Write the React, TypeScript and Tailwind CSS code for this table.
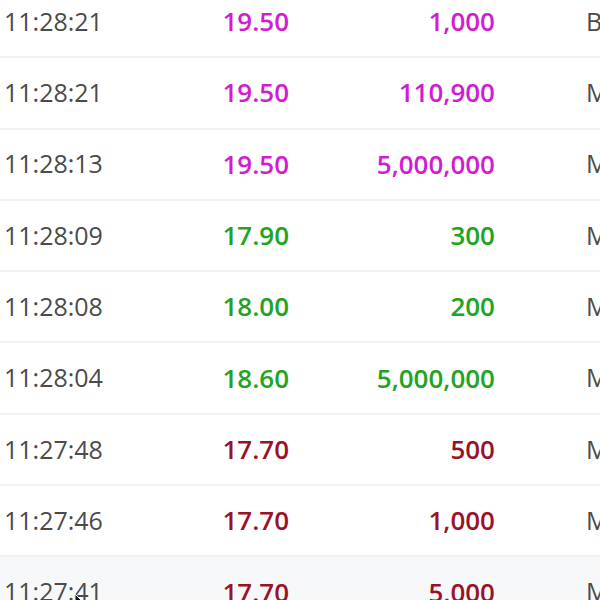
const trades = [
  { time: "11:28:21", price: "19.50", vol: "1,000", side: "B", tone: "ceil" },
  { time: "11:28:21", price: "19.50", vol: "110,900", side: "M", tone: "ceil" },
  { time: "11:28:13", price: "19.50", vol: "5,000,000", side: "M", tone: "ceil" },
  { time: "11:28:09", price: "17.90", vol: "300", side: "M", tone: "up" },
  { time: "11:28:08", price: "18.00", vol: "200", side: "M", tone: "up" },
  { time: "11:28:04", price: "18.60", vol: "5,000,000", side: "M", tone: "up" },
  { time: "11:27:48", price: "17.70", vol: "500", side: "M", tone: "down" },
  { time: "11:27:46", price: "17.70", vol: "1,000", side: "M", tone: "down" },
  { time: "11:27:41", price: "17.70", vol: "5,000", side: "M", tone: "down" },
];

const toneClass: Record<string, string> = {
  ceil: "text-[#d21cd2]",
  up: "text-[#22a322]",
  down: "text-[#9a1228]",
};

export default function App() {
  return (
    <div
      className="w-[600px] h-[600px] overflow-hidden bg-white"
      style={{ fontFamily: '"Open Sans", "Noto Sans", sans-serif' }}
    >
      <div className="-mt-[13px]">
        {trades.map((t, i) => {
          const last = i === trades.length - 1;
          return (
            <div
              key={i}
              className={`relative flex items-center h-[71.3px] border-b-2 border-[#f1f1f1] text-[25px] ${
                last ? "bg-[#f6f8fa]" : "bg-white"
              }`}
            >
              <span className="shrink-0 w-[200px] pl-[4px] text-[#4b4b4b]">{t.time}</span>
              <span className={`shrink-0 w-[89px] text-right text-[26px] font-semibold ${toneClass[t.tone]}`}>
                {t.price}
              </span>
              <span className={`shrink-0 w-[206px] text-right text-[26px] font-semibold ${toneClass[t.tone]}`}>
                {t.vol}
              </span>
              <span className="shrink-0 pl-[91px] text-[#4b4b4b] whitespace-nowrap">{t.side}</span>
              {last && (
                <svg
                  className="absolute left-[74px] top-[36px]"
                  width="10"
                  height="14"
                  viewBox="0 0 10 14"
                >
                  <path d="M1 1 L1 12 L4 9 L9 9 Z" fill="#111" stroke="#fff" strokeWidth="1" />
                </svg>
              )}
            </div>
          );
        })}
      </div>
    </div>
  );
}
